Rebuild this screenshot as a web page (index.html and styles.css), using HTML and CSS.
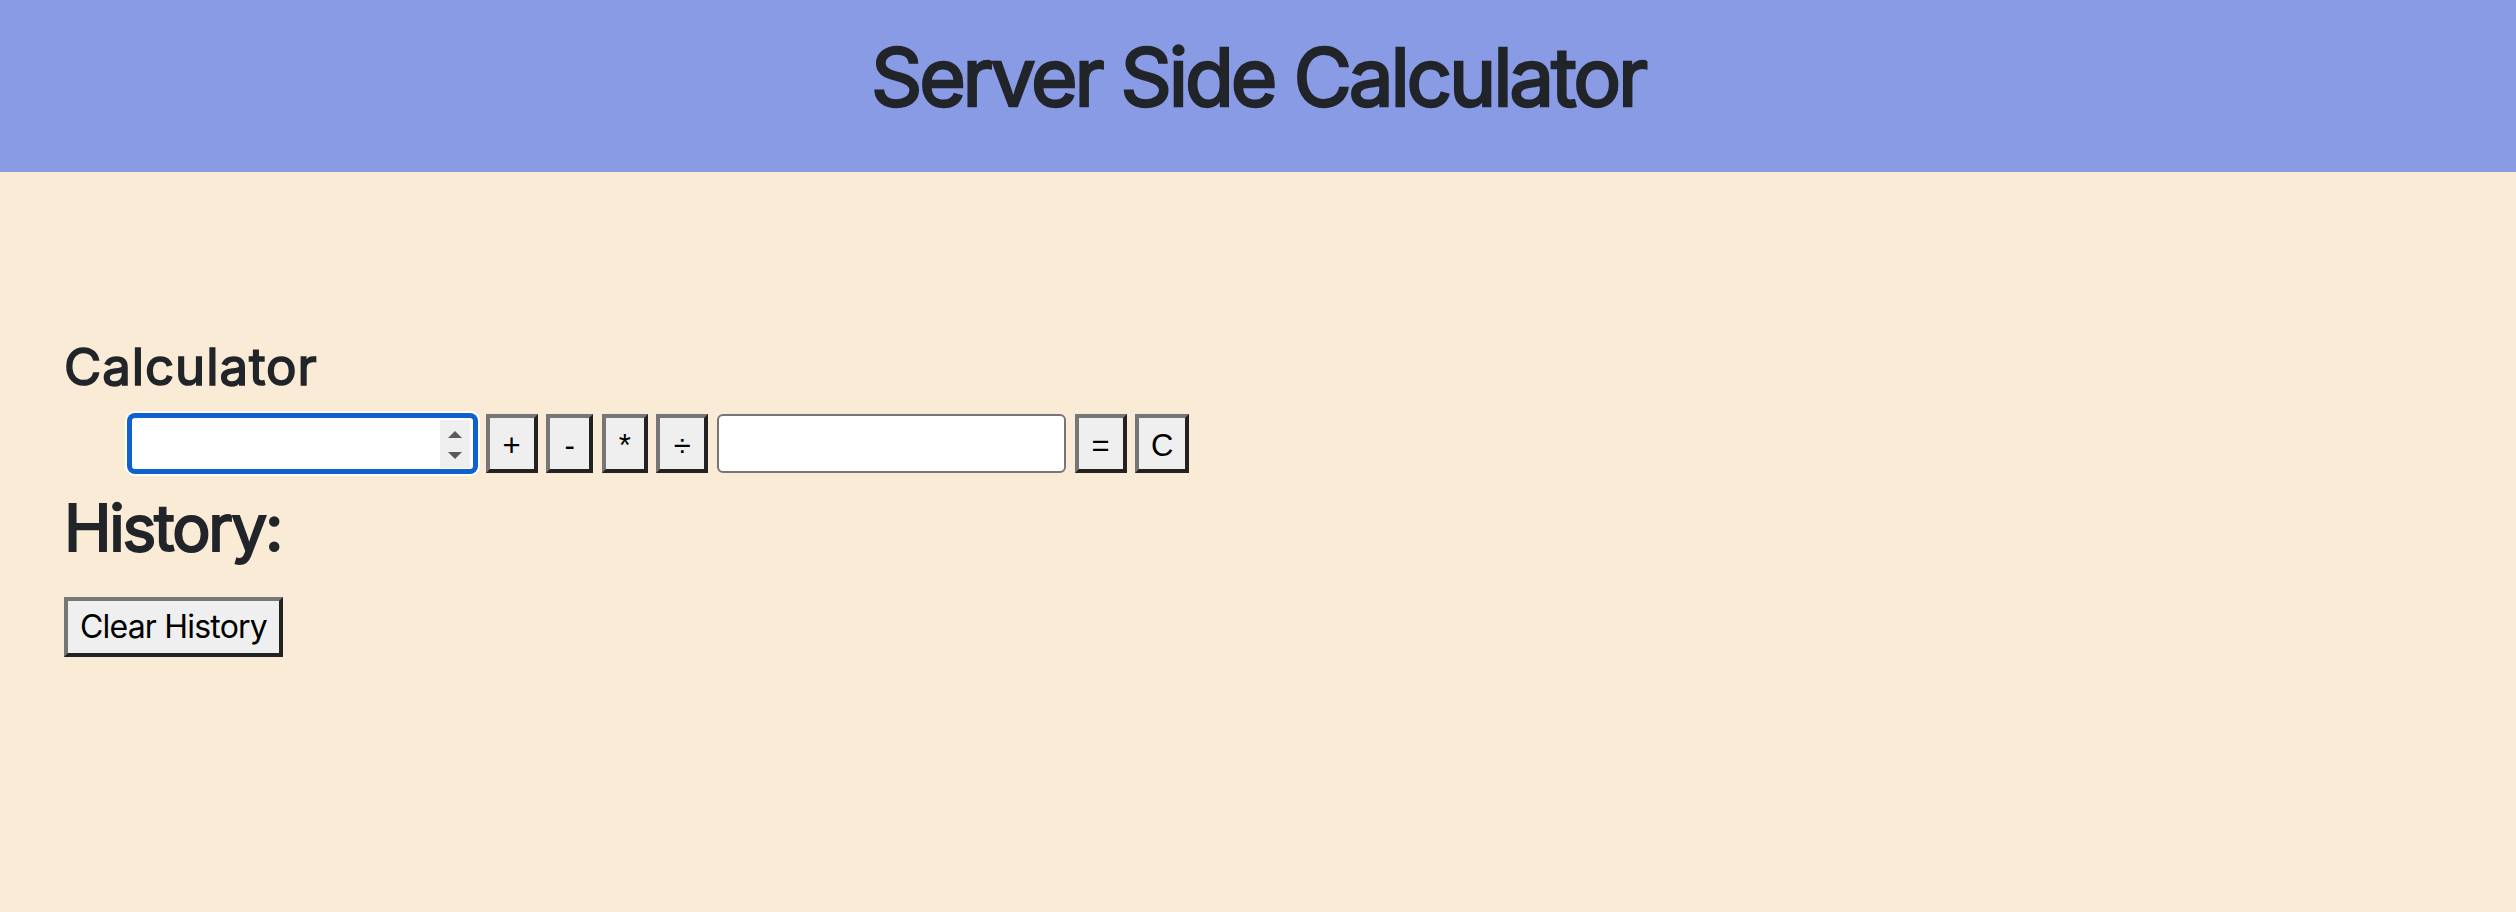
FILE: index.html
```html
<!DOCTYPE html>
<html lang="en">
<head>
<meta charset="utf-8">
<title>Server Side Calculator</title>
<link rel="stylesheet" href="styles.css">
</head>
<body>
<header class="site-header">
  <h1 class="site-title">Server Side Calculator</h1>
</header>
<main class="content">
  <section class="calculator">
    <h2 class="calc-heading">Calculator</h2>
    <form class="calc-row">
      <div class="field">
        <input class="num-input num-input-focused" type="text" aria-label="First number">
        <span class="spinner" aria-hidden="true">
          <svg width="30" height="48" viewBox="0 0 30 48"><polygon points="8,18 22,18 15,11" fill="#5b5b5b"/><polygon points="8,32 22,32 15,39" fill="#5b5b5b"/></svg>
        </span>
      </div>
      <button type="button" class="op op-plus">+</button>
      <button type="button" class="op op-minus">-</button>
      <button type="button" class="op op-times">*</button>
      <button type="button" class="op op-divide">÷</button>
      <input class="num-input" type="text" aria-label="Second number">
      <button type="button" class="op op-equals">=</button>
      <button type="button" class="op op-clear">C</button>
    </form>
  </section>
  <section class="history">
    <h2 class="history-heading">History:</h2>
    <ul class="history-list"></ul>
    <button type="button" class="clear-btn">Clear History</button>
  </section>
</main>
</body>
</html>
```
FILE: styles.css
```css
html, body {
  margin: 0;
  padding: 0;
}
body {
  background: #faebd7;
  color: #212529;
  font-family: Inter, "Noto Sans", "Liberation Sans", sans-serif;
  font-size: 32px;
  line-height: 1.5;
  height: 912px;
}
.site-header {
  background: #8a9be6;
  height: 172px;
  box-sizing: border-box;
  padding-top: 29px;
  text-align: center;
}
.site-title {
  margin: 0;
  font-size: 80px;
  font-weight: 400;
  line-height: 96px;
  letter-spacing: -0.04em;
  -webkit-text-stroke: 2.4px #212529;
}
.content {
  padding: 0 64px;
}
.calc-heading {
  margin: 166px 0 0;
  font-size: 51px;
  font-weight: 400;
  line-height: 57.6px;
  letter-spacing: 0.018em;
  -webkit-text-stroke: 1.6px #212529;
}
.calc-row {
  display: flex;
  align-items: flex-start;
  gap: 8.6px;
  margin: 18.4px 0 0 64px;
}
.field {
  position: relative;
  width: 349px;
  height: 59px;
}
.num-input {
  box-sizing: border-box;
  width: 349px;
  height: 59px;
  margin: 0;
  padding: 0 8px;
  background: #fff;
  border: 2px solid #767676;
  border-radius: 6px;
  font-family: "Liberation Sans", sans-serif;
  font-size: 26px;
  outline: none;
}
.num-input-focused {
  border: 4px solid #0f62cd;
  box-shadow: 0 0 0 1px #0f62cd, 0 0 0 3px #ffffff;
  border-radius: 7px;
}
.spinner {
  position: absolute;
  top: 6px;
  right: 7px;
  width: 30px;
  height: 48px;
  background: #efefef;
  display: block;
}
.spinner svg {
  display: block;
}
.op {
  box-sizing: border-box;
  height: 59px;
  margin: 0;
  padding: 5px 0 0;
  background: #efefef;
  color: #000;
  border-style: solid;
  border-width: 4px;
  border-color: #767676 #222222 #222222 #767676;
  border-radius: 0;
  font-family: "Liberation Sans", Arial, sans-serif;
  font-size: 31px;
  line-height: 46px;
  text-align: center;
}
.op-plus { width: 52px; }
.op-minus { width: 47px; }
.op-times { width: 46px; }
.op-divide { width: 52px; }
.op-equals { width: 52px; }
.op-clear { width: 54px; }
.history-heading {
  margin: 16.6px 0 0;
  font-size: 64px;
  font-weight: 400;
  line-height: 76.8px;
  letter-spacing: -0.035em;
  -webkit-text-stroke: 2px #212529;
}
.history-list {
  margin: 0;
  padding: 0;
  list-style: none;
  height: 31px;
}
.clear-btn {
  display: block;
  box-sizing: border-box;
  height: 60px;
  margin: 0;
  padding: 2px 12px;
  background: #efefef;
  color: #000;
  border-style: solid;
  border-width: 4px;
  border-color: #767676 #222222 #222222 #767676;
  border-radius: 0;
  font-family: Inter, "Noto Sans", sans-serif;
  font-size: 32px;
  line-height: 48px;
  letter-spacing: -0.025em;
}
```
